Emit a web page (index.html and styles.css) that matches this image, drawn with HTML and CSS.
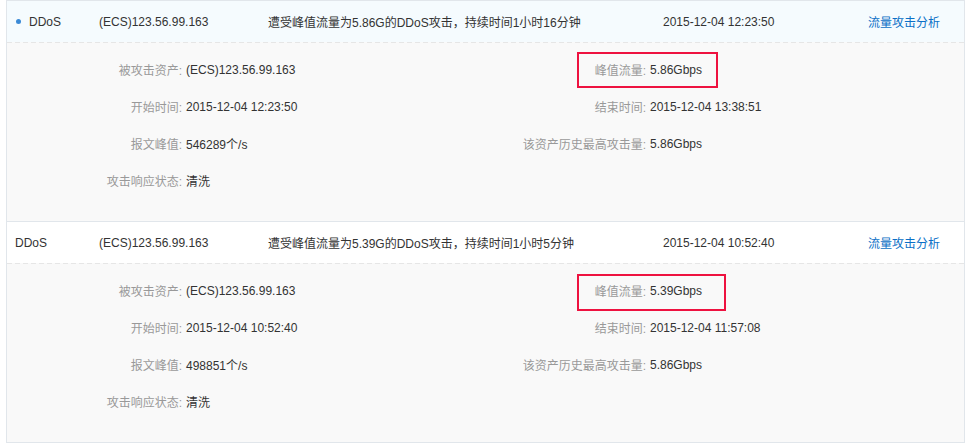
FILE: index.html
```html
<!DOCTYPE html>
<html lang="zh-CN">
<head>
<meta charset="UTF-8"/>
<meta name="viewport" content="width=device-width, initial-scale=1.0"/>
<title>DDoS 攻击事件</title>
<link rel="stylesheet" href="styles.css">
</head>
<body>
<div class="events">

  <!-- Event 1 (selected) -->
  <div class="event">
    <div class="event-head selected">
      <div class="cell type"><span class="dot"></span>DDoS</div>
      <div class="cell">(ECS)123.56.99.163</div>
      <div class="cell">遭受峰值流量为5.86G的DDoS攻击，持续时间1小时16分钟</div>
      <div class="cell">2015-12-04 12:23:50</div>
      <div class="cell"><a class="link" href="#">流量攻击分析</a></div>
    </div>
    <div class="sep"></div>
    <div class="detail">
      <div class="label">被攻击资产:</div><div class="value">(ECS)123.56.99.163</div>
      <div class="label">峰值流量:</div><div class="value"><span class="peak">5.86Gbps<i class="mark"></i></span></div>

      <div class="label">开始时间:</div><div class="value">2015-12-04 12:23:50</div>
      <div class="label">结束时间:</div><div class="value">2015-12-04 13:38:51</div>

      <div class="label">报文峰值:</div><div class="value">546289个/s</div>
      <div class="label">该资产历史最高攻击量:</div><div class="value">5.86Gbps</div>

      <div class="label">攻击响应状态:</div><div class="value">清洗</div>
      <div class="label"></div><div class="value"></div>
    </div>
  </div>

  <!-- Event 2 -->
  <div class="event">
    <div class="event-head">
      <div class="cell type">DDoS</div>
      <div class="cell">(ECS)123.56.99.163</div>
      <div class="cell">遭受峰值流量为5.39G的DDoS攻击，持续时间1小时5分钟</div>
      <div class="cell">2015-12-04 10:52:40</div>
      <div class="cell"><a class="link" href="#">流量攻击分析</a></div>
    </div>
    <div class="sep"></div>
    <div class="detail">
      <div class="label">被攻击资产:</div><div class="value">(ECS)123.56.99.163</div>
      <div class="label">峰值流量:</div><div class="value"><span class="peak">5.39Gbps<i class="mark wide"></i></span></div>

      <div class="label">开始时间:</div><div class="value">2015-12-04 10:52:40</div>
      <div class="label">结束时间:</div><div class="value">2015-12-04 11:57:08</div>

      <div class="label">报文峰值:</div><div class="value">498851个/s</div>
      <div class="label">该资产历史最高攻击量:</div><div class="value">5.86Gbps</div>

      <div class="label">攻击响应状态:</div><div class="value">清洗</div>
      <div class="label"></div><div class="value"></div>
    </div>
  </div>

</div>
</body>
</html>
```

FILE: styles.css
```css
/* Global */
html, body {
  margin:0; padding:0;
  background:#fff;
  font-family:"Liberation Sans", "Noto Sans CJK SC", sans-serif;
  font-size:12px;
  color:#333;
}

/* List container => thin side borders */
.events {
  margin-left:6px;
  width:957px;
  border-left:1px solid #e1e6eb;
  border-right:1px solid #e1e6eb;
  border-top:1px solid #e1e6eb;
}
.event {
  border-bottom:1px solid #e1e6eb;
}

/* Summary row => 5 columns */
.event-head {
  display:grid;
  grid-template-columns:84px 169px 395px 205px 1fr;
  align-items:center;
  height:41px;
  padding-left:8px;
  background:#fff;
}
.event-head.selected { background:#f5fbfe; }
.cell { white-space:nowrap; }
.type { display:flex; align-items:center; }
.dot {
  width:5px; height:5px;
  border-radius:50%;
  background:#3a8ad6;
  margin:0 8px 0 1px;
}
.link {
  color:#0b6fc6;
  text-decoration:none;
}

/* Dashed separator between summary and detail */
.sep {
  height:1px;
  background:repeating-linear-gradient(90deg, #e6e6e6 0 5px, transparent 5px 8px);
  background-color:#f9f9f9;
}

/* Detail panel => label/value pairs, two per line */
.detail {
  display:grid;
  grid-template-columns:175px 304px 160px 1fr;
  grid-auto-rows:37px;
  align-items:center;
  background:#f9f9f9;
  padding:8px 0 22px;
}
.label {
  text-align:right;
  color:#999;
  white-space:nowrap;
}
.value {
  padding-left:4px;
  white-space:nowrap;
}

/* Red annotation box around peak traffic */
.peak { position:relative; }
.mark {
  position:absolute;
  left:-73px; right:-16px;
  top:-11px; bottom:-11px;
  border:2px solid #ee1240;
}
.mark.wide { right:-24px; top:-10px; bottom:-13px; }
```
